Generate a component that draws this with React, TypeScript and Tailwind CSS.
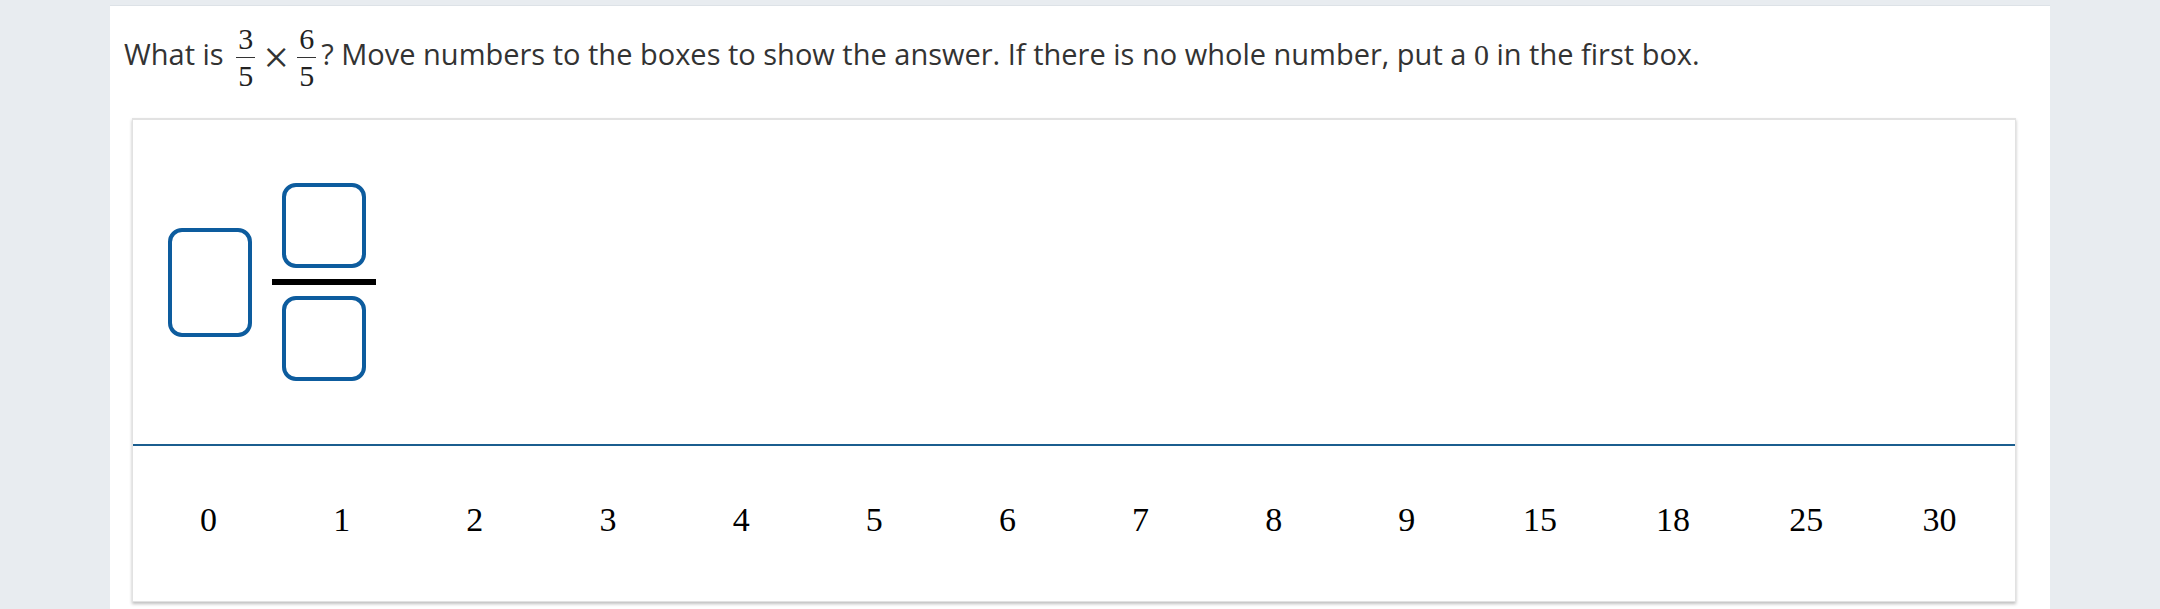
import React from 'react'

const tiles = ['0', '1', '2', '3', '4', '5', '6', '7', '8', '9', '15', '18', '25', '30']

function Frac({ num, den }: { num: string; den: string }) {
  return (
    <span className="inline-flex flex-col items-center align-middle mx-[5px] font-['Liberation_Serif',serif] text-[30px] leading-none text-[#222]">
      <span className="px-[2px] pb-[3px]">{num}</span>
      <span className="w-full border-t border-[#333]" />
      <span className="px-[2px] pt-[3px]">{den}</span>
    </span>
  )
}

function DropBox({ tall }: { tall?: boolean }) {
  return (
    <div
      className={`w-[84px] rounded-[14px] border-4 border-[#0d5c9e] bg-white ${
        tall ? 'h-[109px]' : 'h-[85px]'
      }`}
    />
  )
}

export default function App() {
  return (
    <div className="min-h-[609px] bg-[#e8ecf0] pt-[5px]">
      <div className="mx-auto w-[1940px] h-[604px] bg-white border-t border-[#dde2e7] pl-[14px] pr-[34px]">
        <p className="pt-[18px] h-[112px] font-['Open_Sans',sans-serif] text-[29px] leading-[36px] text-[#333] whitespace-nowrap">
          What is <Frac num="3" den="5" />
          <span className="font-['Liberation_Serif',serif] text-[46px] leading-none mx-[3px] align-middle">×</span>
          <Frac num="6" den="5" />? Move numbers to the boxes to show the answer. If there is no whole number, put a{' '}
          <span className="font-['Liberation_Serif',serif] text-[30px]">0</span> in the first box.
        </p>

        <div className="ml-[8px] h-[484px] bg-white border border-[#e2e2e2] border-t-2 shadow-[0_2px_3px_rgba(0,0,0,0.25)] flex flex-col">
          <div className="h-[324px] flex items-center pl-[35px] gap-[20px]">
            <DropBox tall />
            <div className="flex flex-col items-center w-[104px]">
              <DropBox />
              <div className="w-[104px] h-[6px] bg-black my-[11px]" />
              <DropBox />
            </div>
          </div>
          <div className="h-[2px] bg-[#1b5e8f]" />
          <div className="flex-1 flex items-center px-[9px] pb-[8px]">
            {tiles.map((t) => (
              <div
                key={t}
                className="flex-1 text-center font-['Liberation_Serif',serif] text-[34px] leading-none text-black"
              >
                {t}
              </div>
            ))}
          </div>
        </div>
      </div>
    </div>
  )
}
